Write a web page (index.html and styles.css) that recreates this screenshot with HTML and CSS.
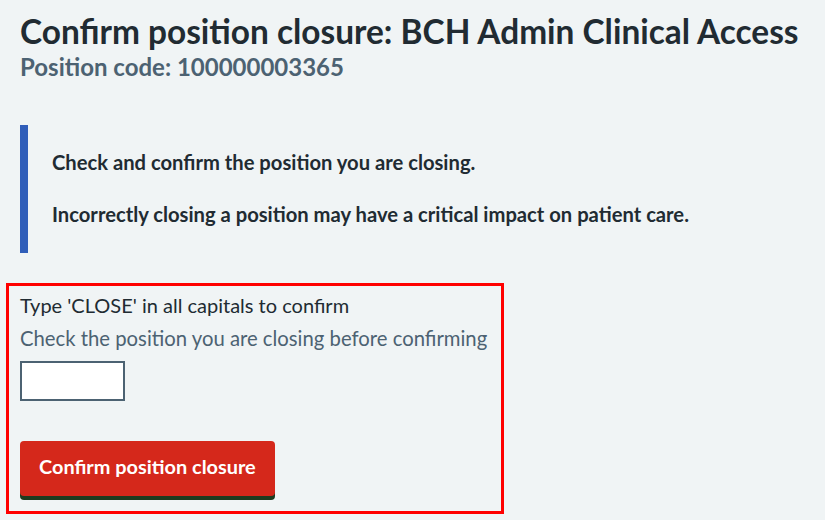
FILE: index.html
```html
<!DOCTYPE html>
<html lang="en">
<head>
<meta charset="utf-8">
<title>Confirm position closure</title>
<link rel="stylesheet" href="styles.css">
</head>
<body>
<main class="page">
  <h1 class="title">Confirm position closure: BCH Admin Clinical Access
    <span class="caption">Position code: 100000003365</span>
  </h1>
  <div class="inset">
    <p class="inset-text">Check and confirm the position you are closing.</p>
    <p class="inset-text">Incorrectly closing a position may have a critical impact on patient care.</p>
  </div>
  <form class="confirm-box">
    <label class="label" for="confirm">Type 'CLOSE' in all capitals to confirm</label>
    <div class="hint">Check the position you are closing before confirming</div>
    <input class="input" id="confirm" type="text">
    <div class="actions">
      <button class="button" type="button">Confirm position closure</button>
    </div>
  </form>
</main>
</body>
</html>
```
FILE: styles.css
```css
html, body {
  margin: 0;
  padding: 0;
  background: #f0f4f5;
}
body {
  font-family: Lato, "Open Sans", sans-serif;
  color: #212b32;
}
.page {
  padding: 11px 0 0 20px;
}
.title {
  margin: 0;
  font-size: 33.4px;
  line-height: 40px;
  font-weight: 700;
  white-space: nowrap;
}
.caption {
  display: block;
  margin-top: 2px;
  font-size: 24px;
  line-height: 28px;
  font-weight: 700;
  color: #4c6272;
}
.inset {
  margin-top: 44px;
  border-left: 8px solid #305eb9;
  padding: 23px 0 25px 24px;
  width: 720px;
}
.inset-text {
  margin: 0;
  font-size: 20.2px;
  line-height: 28px;
  font-weight: 700;
}
.inset-text + .inset-text {
  margin-top: 24px;
}
.confirm-box {
  box-sizing: border-box;
  width: 498px;
  margin: 30px 0 0 -14px;
  border: 3px solid #ff0000;
  padding: 5px 11px 15px 11px;
}
.label {
  display: block;
  font-size: 20px;
  line-height: 28px;
}
.hint {
  margin-top: 5px;
  font-size: 20.3px;
  line-height: 28px;
  color: #4c6272;
}
.input {
  display: block;
  box-sizing: border-box;
  margin: 9px 0 0 0;
  width: 105px;
  height: 40px;
  border: 2px solid #4c6272;
  border-radius: 0;
  background: #ffffff;
  padding: 4px;
  font: inherit;
}
.actions {
  margin-top: 40px;
  display: flex;
}
.button {
  border: 0;
  border-radius: 4px;
  background: #d5281b;
  color: #ffffff;
  font-family: Lato, "Open Sans", sans-serif;
  font-size: 19.9px;
  line-height: 28px;
  font-weight: 700;
  padding: 11px 19px 16px 19px;
  box-shadow: 0 4px 0 #1e3b1f;
  cursor: pointer;
}
```
